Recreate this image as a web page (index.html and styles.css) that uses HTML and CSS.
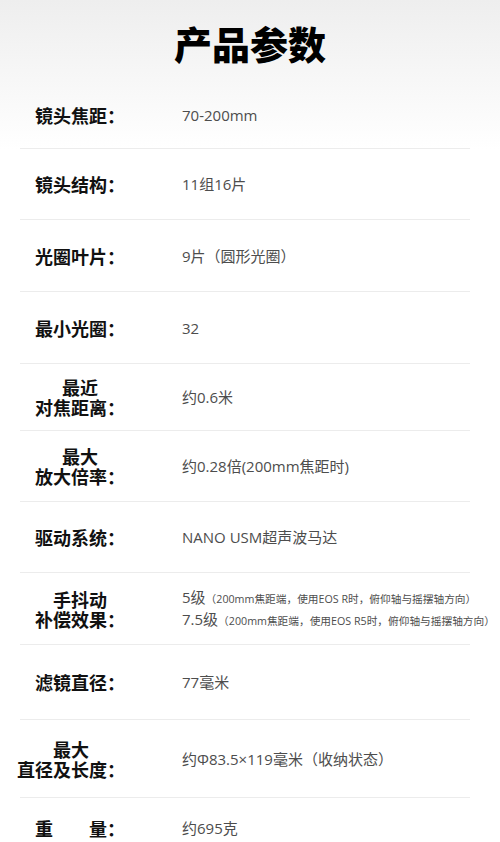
FILE: index.html
```html
<!DOCTYPE html>
<html lang="zh-CN">
<head>
  <meta charset="UTF-8" />
  <title>产品参数</title>
  <link rel="stylesheet" href="styles.css">
</head>
<body>

<div class="page">
  <h1 class="title">产品参数</h1>

  <div class="spec-list">
    <div class="spec-row">
      <div class="spec-label"><span>镜头焦距：</span></div>
      <div class="spec-value">70-200mm</div>
    </div>
    <div class="spec-row">
      <div class="spec-label"><span>镜头结构：</span></div>
      <div class="spec-value">11组16片</div>
    </div>
    <div class="spec-row">
      <div class="spec-label"><span>光圈叶片：</span></div>
      <div class="spec-value">9片（圆形光圈）</div>
    </div>
    <div class="spec-row">
      <div class="spec-label"><span>最小光圈：</span></div>
      <div class="spec-value">32</div>
    </div>
    <div class="spec-row">
      <div class="spec-label"><span>最近<br>对焦距离：</span></div>
      <div class="spec-value">约0.6米</div>
    </div>
    <div class="spec-row">
      <div class="spec-label"><span>最大<br>放大倍率：</span></div>
      <div class="spec-value">约0.28倍(200mm焦距时)</div>
    </div>
    <div class="spec-row">
      <div class="spec-label"><span>驱动系统：</span></div>
      <div class="spec-value">NANO USM超声波马达</div>
    </div>
    <div class="spec-row">
      <div class="spec-label"><span>手抖动<br>补偿效果：</span></div>
      <div class="spec-value">
        <div>5级<small>（200mm焦距端，使用EOS R时，俯仰轴与摇摆轴方向）</small></div>
        <div>7.5级<small>（200mm焦距端，使用EOS R5时，俯仰轴与摇摆轴方向）</small></div>
      </div>
    </div>
    <div class="spec-row">
      <div class="spec-label"><span>滤镜直径：</span></div>
      <div class="spec-value">77毫米</div>
    </div>
    <div class="spec-row">
      <div class="spec-label"><span>最大<br>直径及长度：</span></div>
      <div class="spec-value">约Φ83.5×119毫米（收纳状态）</div>
    </div>
    <div class="spec-row">
      <div class="spec-label"><span>重　　量：</span></div>
      <div class="spec-value">约695克</div>
    </div>
  </div>
</div>

</body>
</html>
```

FILE: styles.css
```css
body {
  margin: 0;
  font-family: "Open Sans", "Noto Sans CJK SC", sans-serif;
  background: #fff;
}

.page {
  background: linear-gradient(#eeeeee, #ffffff 150px);
  min-height: 100vh;
}

.title {
  margin: 0;
  padding-top: 24px;
  margin-bottom: 19px;
  font-family: "Noto Sans CJK SC", sans-serif;
  font-size: 38px;
  font-weight: 900;
  line-height: 38px;
  text-align: center;
  color: #000;
}

.spec-list {
  margin: 0 30px 0 20px;
}

.spec-row {
  display: flex;
  align-items: center;
  height: 71px;
  border-bottom: 1px solid #ececec;
}

/* row heights follow the original picture */
.spec-row:nth-child(1) { height: 67px; }
.spec-row:nth-child(2),
.spec-row:nth-child(6),
.spec-row:nth-child(7) { height: 70px; }
.spec-row:nth-child(5) { height: 66px; }
.spec-row:nth-child(9) { height: 74px; }
.spec-row:nth-child(10) { height: 77px; }
.spec-row:nth-child(11) { height: 60px; border-bottom: none; }

.spec-label {
  width: 105px;
  flex-shrink: 0;
  display: flex;
  justify-content: flex-end;
}

.spec-label span {
  flex-shrink: 0;
  white-space: nowrap;
  text-align: center;
  font-family: "Noto Sans CJK SC", sans-serif;
  font-size: 18px;
  font-weight: bold;
  line-height: 20px;
  color: #111;
}

.spec-value {
  margin-left: 57px;
  white-space: nowrap;
  font-size: 15px;
  line-height: 20px;
  color: #4d4d4d;
}

.spec-value small {
  font-size: 10.7px;
}
```
